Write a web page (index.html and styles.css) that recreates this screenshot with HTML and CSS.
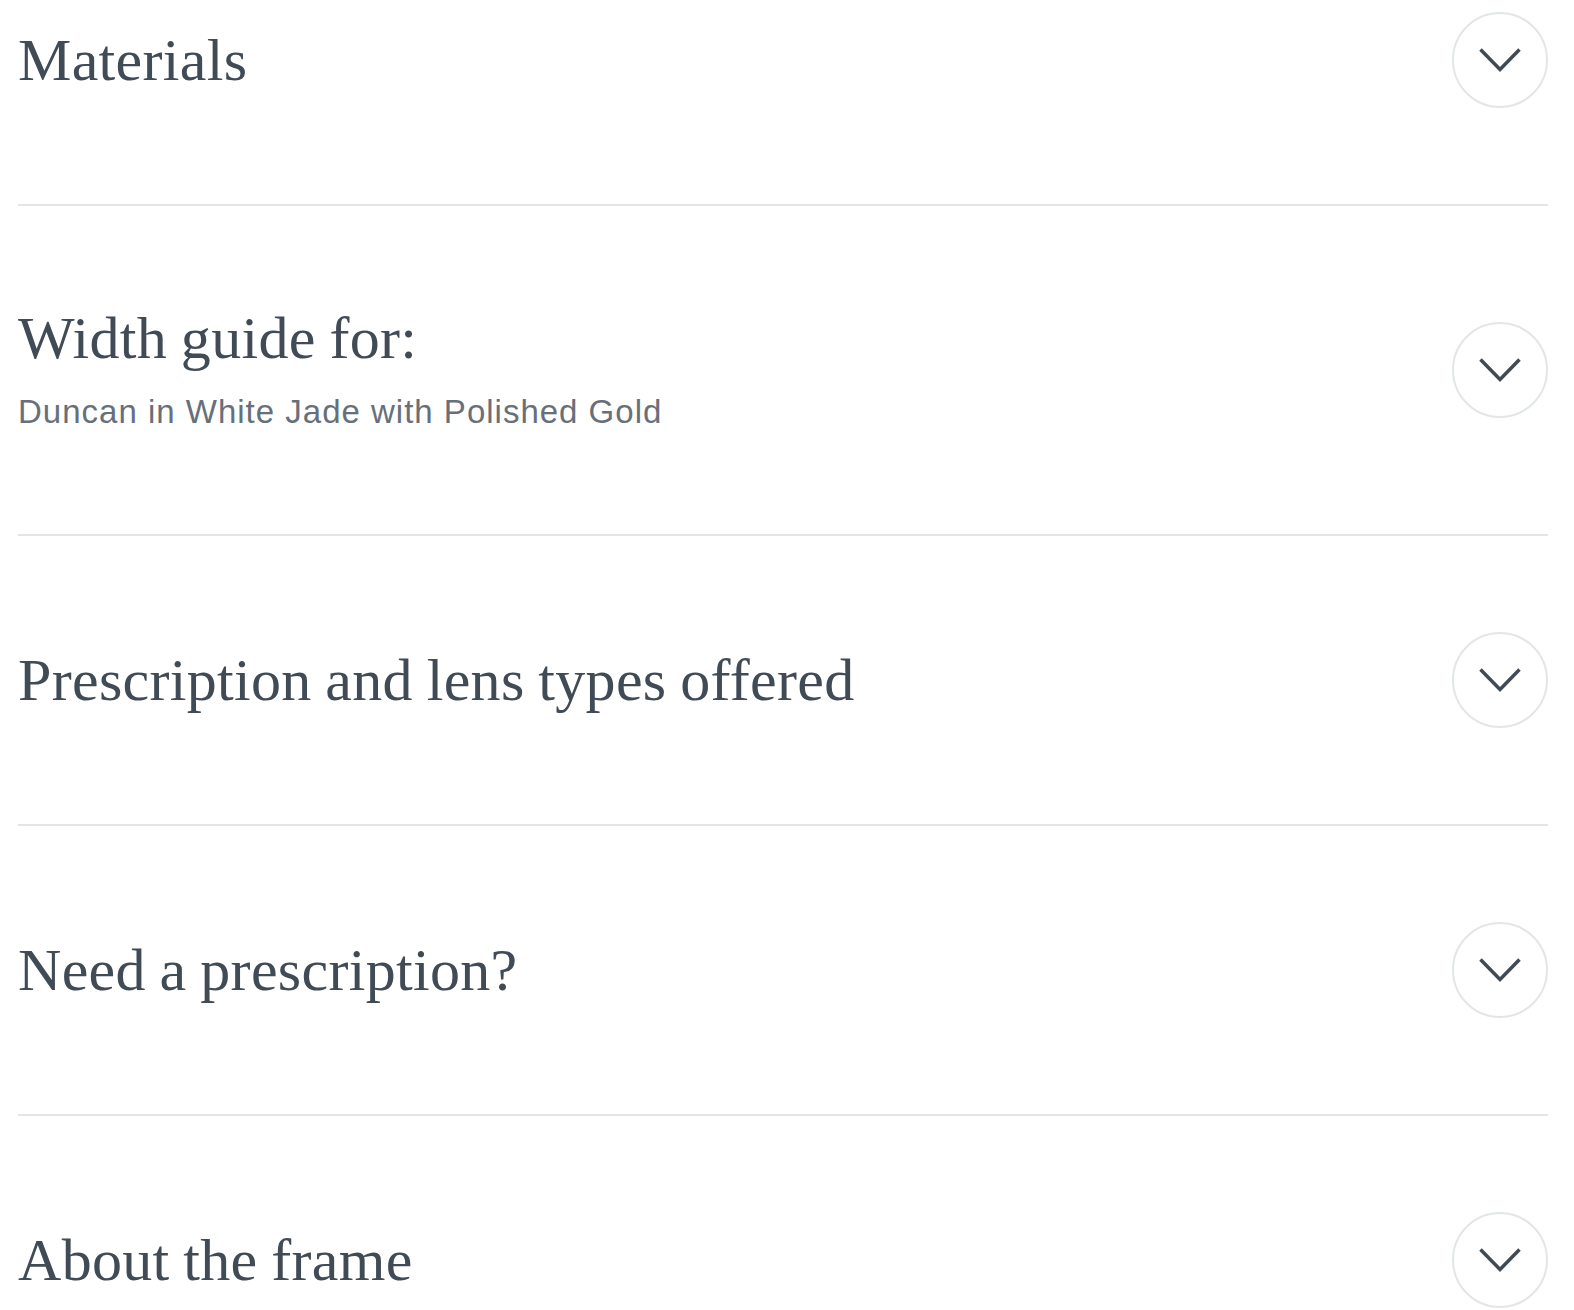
FILE: index.html
```html
<!DOCTYPE html>
<html lang="en">
<head>
<meta charset="utf-8">
<title>Product details</title>
<link rel="stylesheet" href="styles.css">
</head>
<body>
<div class="accordion">
  <div class="item item--first">
    <div class="item-text"><h2 class="item-title">Materials</h2></div>
    <button class="toggle" aria-label="Expand"><svg class="chevron" viewBox="0 0 96 96"><path d="M28.5 37.5 L48 57.5 L67.5 37.5"/></svg></button>
  </div>
  <div class="item">
    <div class="item-text">
      <h2 class="item-title">Width guide for:</h2>
      <p class="item-sub">Duncan in White Jade with Polished Gold</p>
    </div>
    <button class="toggle" aria-label="Expand"><svg class="chevron" viewBox="0 0 96 96"><path d="M28.5 37.5 L48 57.5 L67.5 37.5"/></svg></button>
  </div>
  <div class="item">
    <div class="item-text"><h2 class="item-title">Prescription and lens types offered</h2></div>
    <button class="toggle" aria-label="Expand"><svg class="chevron" viewBox="0 0 96 96"><path d="M28.5 37.5 L48 57.5 L67.5 37.5"/></svg></button>
  </div>
  <div class="item">
    <div class="item-text"><h2 class="item-title">Need a prescription?</h2></div>
    <button class="toggle" aria-label="Expand"><svg class="chevron" viewBox="0 0 96 96"><path d="M28.5 37.5 L48 57.5 L67.5 37.5"/></svg></button>
  </div>
  <div class="item">
    <div class="item-text"><h2 class="item-title">About the frame</h2></div>
    <button class="toggle" aria-label="Expand"><svg class="chevron" viewBox="0 0 96 96"><path d="M28.5 37.5 L48 57.5 L67.5 37.5"/></svg></button>
  </div>
</div>
</body>
</html>
```
FILE: styles.css
```css
html, body {
  margin: 0;
  padding: 0;
  background: #ffffff;
  overflow: hidden;
}
.accordion {
  margin: 0 26px 0 18px;
}
.item {
  display: flex;
  align-items: center;
  justify-content: space-between;
  padding: 96px 0;
  border-bottom: 2px solid #e2e6e6;
}
.item--first {
  padding-top: 12px;
}
.item:last-child {
  border-bottom: none;
}
.item-text {
  display: flex;
  flex-direction: column;
}
.item-title {
  margin: 0;
  font-family: "Liberation Serif", "Times New Roman", serif;
  font-weight: 400;
  font-size: 60px;
  line-height: 72px;
  color: #414b56;
  letter-spacing: 0.3px;
  word-spacing: -1.5px;
}
.item-sub {
  margin: 12px 0 0;
  font-family: "Liberation Sans", Arial, sans-serif;
  font-size: 33px;
  line-height: 52px;
  letter-spacing: 1px;
  color: #67707a;
}
.toggle {
  flex: 0 0 auto;
  width: 96px;
  height: 96px;
  padding: 0;
  border: 2px solid #e2e6e6;
  border-radius: 50%;
  background: #ffffff;
  display: flex;
  align-items: center;
  justify-content: center;
  box-sizing: border-box;
}
.chevron {
  width: 96px;
  height: 96px;
  flex: 0 0 auto;
  fill: none;
  stroke: #414b56;
  stroke-width: 3.5;
  stroke-linejoin: miter;
}
```
